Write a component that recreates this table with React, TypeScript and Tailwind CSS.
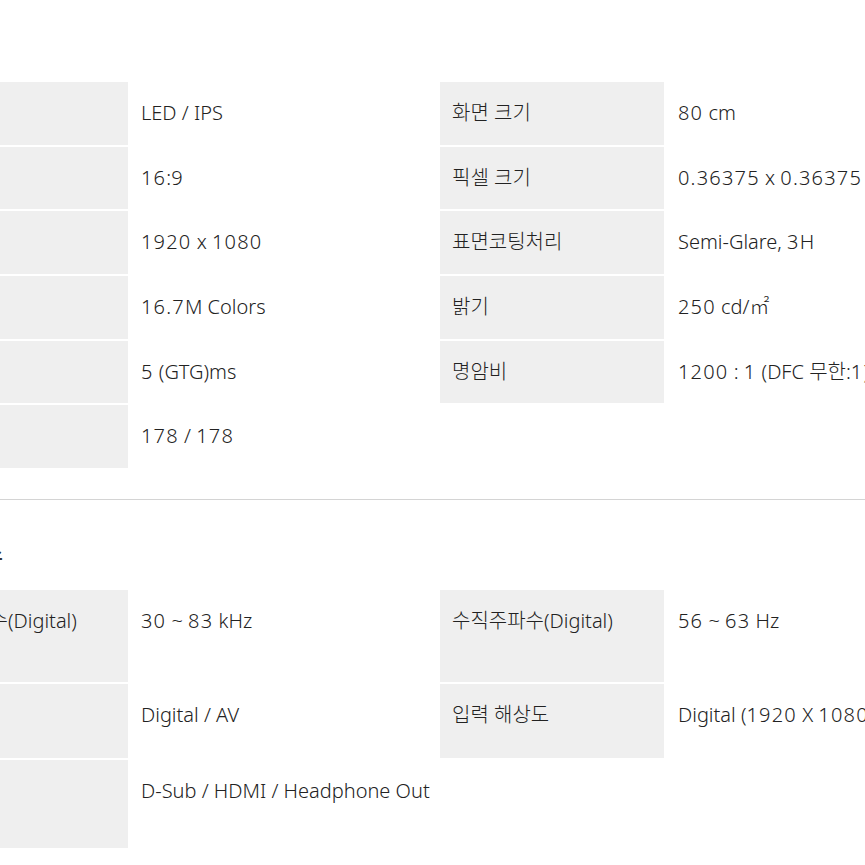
import React from "react";

const FONT = { fontFamily: '"Noto Sans", "Noto Sans CJK KR", sans-serif' };

type Row = { l1: string; v1: string; l2?: string; v2?: string; h: string };

const sec1: Row[] = [
  { l1: "패널", v1: "LED / IPS", l2: "화면 크기", v2: "80 cm", h: "h-[62.7px]" },
  { l1: "화면비율", v1: "16:9", l2: "픽셀 크기", v2: "0.36375 x 0.36375", h: "h-[62.7px]" },
  { l1: "해상도", v1: "1920 x 1080", l2: "표면코팅처리", v2: "Semi-Glare, 3H", h: "h-[62.7px]" },
  { l1: "색상수", v1: "16.7M Colors", l2: "밝기", v2: "250 cd/㎡", h: "h-[62.7px]" },
  { l1: "응답속도", v1: "5 (GTG)ms", l2: "명암비", v2: "1200 : 1 (DFC 무한:1)", h: "h-[62.7px]" },
  { l1: "시야각", v1: "178 / 178", h: "h-[62.7px]" },
];

const sec2: Row[] = [
  { l1: "수평주파수(Digital)", v1: "30 ~ 83 kHz", l2: "수직주파수(Digital)", v2: "56 ~ 63 Hz", h: "h-[92px]" },
  { l1: "입력", v1: "Digital / AV", l2: "입력 해상도", v2: "Digital (1920 X 1080 @ 60Hz)", h: "h-[74px]" },
  { l1: "단자", v1: "D-Sub / HDMI / Headphone Out", h: "h-[88px]" },
];

function Val({ text }: { text: string }) {
  const parts = text.split(/([0-9.]+)/);
  return (
    <>
      {parts.map((p, i) =>
        /^[0-9.]+$/.test(p) ? (
          <span key={i} className="tracking-[1.2px]">
            {p}
          </span>
        ) : (
          <span key={i}>{p}</span>
        )
      )}
    </>
  );
}

function Table({ rows }: { rows: Row[] }) {
  return (
    <div className="grid grid-cols-[224px_312px_224px_1fr] gap-y-[2px] text-[20px] font-light leading-[28px] text-[#222]">
      {rows.map((r, i) => (
        <React.Fragment key={i}>
          <div className={`${r.h} bg-[#efefef] pl-[12px] pt-[17px] whitespace-nowrap`}>{r.l1}</div>
          <div className={`${r.h} bg-white pl-[13px] pt-[17px] whitespace-nowrap`}>
            <Val text={r.v1} />
          </div>
          <div className={`${r.h} ${r.l2 ? "bg-[#efefef]" : "bg-white"} pl-[12px] pt-[17px] whitespace-nowrap`}>
            {r.l2 ?? ""}
          </div>
          <div className={`${r.h} bg-white pl-[14px] pt-[17px] whitespace-nowrap`}>
            <Val text={r.v2 ?? ""} />
          </div>
        </React.Fragment>
      ))}
    </div>
  );
}

export default function App() {
  return (
    <div className="w-[865px] h-[865px] overflow-hidden bg-white" style={FONT}>
      <div className="ml-[-96px] w-[1200px] pt-[82px]">
        <Table rows={sec1} />
        <div className="mt-[31px] border-t border-[#d4d4d4]" />
        <div className="mt-[36px] h-[30px] w-[99px] text-right whitespace-nowrap text-[22px] leading-[30px] font-medium text-[#333] flex justify-end">
          <span>인터페이스</span>
        </div>
        <div className="mt-[24px]">
          <Table rows={sec2} />
        </div>
      </div>
    </div>
  );
}
